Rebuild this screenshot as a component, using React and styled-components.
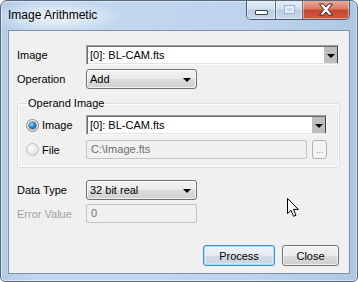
import React from "react";
import styled, { createGlobalStyle } from "styled-components";

const GlobalStyle = createGlobalStyle`
  html, body {
    margin: 0;
    padding: 0;
    background: #ffffff;
  }
  body {
    font-family: "Liberation Sans", Arial, sans-serif;
    font-size: 11px;
    color: #000;
  }
  * {
    box-sizing: border-box;
  }
`;

const Window = styled.div`
  position: relative;
  width: 358px;
  height: 282px;
  display: flex;
  flex-direction: column;
  border: 1px solid #56687c;
  border-radius: 7px 7px 5px 5px;
  background:
    radial-gradient(ellipse 70px 16px at 55px 16px, rgba(255, 255, 255, 0.75), rgba(255, 255, 255, 0) 100%),
    linear-gradient(to right, #b4cbe6 0px, #c3d8f0 40px, #bdd3ed 260px, #aec7e4 100%);
  box-shadow: inset 0 0 0 1px rgba(255, 255, 255, 0.5);
  overflow: hidden;
`;

const TitleBar = styled.div`
  height: 29px;
  display: flex;
  justify-content: space-between;
  align-items: flex-start;
`;

const Title = styled.div`
  padding: 7px 0 0 7px;
  font-size: 12px;
  line-height: 15px;
  color: #000;
`;

const CaptionGroup = styled.div`
  display: flex;
  height: 20px;
  margin: -1px 7px 0 0;
  border: 1px solid #4d5d70;
  border-top: none;
  border-radius: 0 0 5px 5px;
  overflow: hidden;
`;

const CaptionButton = styled.div`
  width: ${(p) => p.$w}px;
  height: 100%;
  display: flex;
  align-items: center;
  justify-content: center;
  border-left: ${(p) => (p.$first ? "none" : "1px solid #5a6b7e")};
  background: ${(p) =>
    p.$close
      ? "linear-gradient(to bottom, #eab0a1 0%, #dc7a65 45%, #c7462f 55%, #cc5a40 100%)"
      : "linear-gradient(to bottom, #e6eef8 0%, #d3e0ef 45%, #bccee4 55%, #c7d7ea 100%)"};
  box-shadow: inset 0 0 0 1px rgba(255, 255, 255, 0.45);
`;

const MinGlyph = styled.div`
  width: 13px;
  height: 5px;
  margin-top: 6px;
  background: #fff;
  border: 1px solid #36414d;
  border-radius: 1px;
`;

const MaxGlyph = styled.div`
  width: 11px;
  height: 9px;
  border: 1px solid #a4b3c4;
  background: #c8d6e7;
  box-shadow: inset 0 0 0 2px #e4ecf5;
`;

const CloseGlyph = styled.svg`
  width: 16px;
  height: 13px;
`;

const Client = styled.div`
  flex: 1;
  margin: 0 7px 7px 7px;
  border: 1px solid #7f91a6;
  background: #f0f0f0;
  padding: 14px 9px 0 8px;
  display: flex;
  flex-direction: column;
`;

const FormGrid = styled.div`
  display: grid;
  grid-template-columns: ${(p) => p.$label}px 1fr;
  row-gap: ${(p) => p.$gap}px;
  align-items: center;
`;

const Label = styled.div`
  color: ${(p) => (p.$disabled ? "#a0a0a0" : "#000")};
  line-height: 14px;
`;

const Combo = styled.div`
  height: 20px;
  display: flex;
  margin-right: ${(p) => p.$mr || 0}px;
  background: #fff;
  border-top: 1px solid #a0a0a0;
  border-left: 1px solid #a0a0a0;
  border-right: 1px solid #fbfbfb;
  border-bottom: 1px solid #fbfbfb;
  box-shadow: inset 1px 1px 0 #6a6a6a, inset -1px -1px 0 #e3e3e3;
`;

const ComboText = styled.div`
  flex: 1;
  padding-left: 3px;
  line-height: 18px;
`;

const ComboButton = styled.div`
  width: 14px;
  margin: 1px 0 1px 0;
  display: flex;
  align-items: center;
  justify-content: center;
  background: #bfbfbf;
  border-right: 1px solid #3a3a3a;
`;

const Arrow = styled.div`
  width: 0;
  height: 0;
  border-left: 4px solid transparent;
  border-right: 4px solid transparent;
  border-top: 4px solid #000;
  margin-top: 1px;
`;

const Dropdown = styled.div`
  width: 111px;
  height: 20px;
  display: flex;
  align-items: center;
  justify-content: space-between;
  padding: 0 5px 0 3px;
  border: 1px solid #707070;
  border-radius: 3px;
  background: linear-gradient(to bottom, #f2f2f2 0%, #ebebeb 50%, #dddddd 50%, #cfcfcf 100%);
  box-shadow: inset 0 0 0 1px rgba(255, 255, 255, 0.7);
`;

const TextBox = styled.div`
  width: ${(p) => (p.$w ? `${p.$w}px` : "auto")};
  flex: ${(p) => (p.$w ? "none" : 1)};
  height: 19px;
  padding-left: 4px;
  line-height: 17px;
  color: #6d6d6d;
  background: #f0f0f0;
  border: 1px solid #c3c3c3;
  border-radius: 2px;
`;

const Group = styled.fieldset`
  margin: 7px 0 0 0;
  padding: 5px 12px 8px 8px;
  border: 1px solid #d5dfe5;
  border-radius: 3px;
  box-shadow: inset 0 0 0 1px #ffffff;
  min-width: 0;
`;

const Legend = styled.legend`
  padding: 0 2px;
  line-height: 14px;
`;

const RadioLabel = styled.div`
  display: flex;
  align-items: center;
  gap: 3px;
  color: #000;
  line-height: 14px;
`;

const Radio = styled.span`
  width: 13px;
  height: 13px;
  border-radius: 50%;
  display: inline-flex;
  align-items: center;
  justify-content: center;
  border: 1px solid ${(p) => (p.$checked ? "#8a8a8a" : "#bdbdbd")};
  background: ${(p) =>
    p.$checked
      ? "radial-gradient(circle at 40% 35%, #ffffff 0%, #e4e4e4 70%, #cfcfcf 100%)"
      : "radial-gradient(circle at 40% 35%, #fbfbfb 0%, #e8e8e8 60%, #d4d4d4 100%)"};
`;

const RadioDot = styled.span`
  width: 7px;
  height: 7px;
  border-radius: 50%;
  background: radial-gradient(circle at 40% 35%, #9ad8fb 0%, #2a86cf 45%, #0e4c86 100%);
  box-shadow: 0 0 0 0.5px #1a3f66;
`;

const FileRow = styled.div`
  display: flex;
  gap: 5px;
`;

const BrowseButton = styled.div`
  width: 15px;
  height: 19px;
  display: flex;
  align-items: flex-end;
  justify-content: center;
  padding-bottom: 3px;
  border: 1px solid #adb2b5;
  border-radius: 3px;
  background: #f4f4f4;
  color: #9a9a9a;
  font-size: 10px;
  line-height: 10px;
  letter-spacing: -0.5px;
`;

const LowerGrid = styled(FormGrid)`
  margin-top: 12px;
`;

const ButtonRow = styled.div`
  margin-top: 22px;
  padding-right: 1px;
  display: flex;
  justify-content: flex-end;
  gap: 7px;
`;

const Button = styled.div`
  width: ${(p) => p.$w}px;
  height: 21px;
  display: flex;
  align-items: center;
  justify-content: center;
  border-radius: 3px;
  border: 1px solid ${(p) => (p.$default ? "#3c8fd1" : "#707070")};
  background: ${(p) =>
    p.$default
      ? "linear-gradient(to bottom, #eef3f7 0%, #e3eaf0 50%, #d3dde6 50%, #c6d3de 100%)"
      : "linear-gradient(to bottom, #f2f2f2 0%, #ebebeb 50%, #dddddd 50%, #cfcfcf 100%)"};
  box-shadow: ${(p) =>
    p.$default
      ? "inset 0 0 0 1px #a8dcf8, inset 0 0 0 2px rgba(255,255,255,0.35)"
      : "inset 0 0 0 1px rgba(255,255,255,0.7)"};
`;

const Cursor = styled.svg`
  position: absolute;
  left: 286px;
  top: 197px;
  width: 13px;
  height: 20px;
`;

export default function App() {
  return (
    <>
      <GlobalStyle />
      <Window>
        <TitleBar>
          <Title>Image Arithmetic</Title>
          <CaptionGroup>
            <CaptionButton $w={28} $first>
              <MinGlyph />
            </CaptionButton>
            <CaptionButton $w={27}>
              <MaxGlyph />
            </CaptionButton>
            <CaptionButton $w={47} $close>
              <CloseGlyph viewBox="0 0 16 13">
                <path
                  d="M1.5 1 L5.5 1 L8 4 L10.5 1 L14.5 1 L10.2 6.5 L14.5 12 L10.5 12 L8 9 L5.5 12 L1.5 12 L5.8 6.5 Z"
                  fill="#ffffff"
                  stroke="#4a2020"
                  strokeWidth="1"
                  strokeLinejoin="round"
                />
              </CloseGlyph>
            </CaptionButton>
          </CaptionGroup>
        </TitleBar>

        <Client>
          <FormGrid $label={69} $gap={4}>
            <Label>Image</Label>
            <Combo $mr={1}>
              <ComboText>[0]: BL-CAM.fts</ComboText>
              <ComboButton>
                <Arrow />
              </ComboButton>
            </Combo>
            <Label>Operation</Label>
            <Dropdown>
              <span>Add</span>
              <Arrow />
            </Dropdown>
          </FormGrid>

          <Group>
            <Legend>Operand Image</Legend>
            <FormGrid $label={60} $gap={5}>
              <RadioLabel>
                <Radio $checked>
                  <RadioDot />
                </Radio>
                Image
              </RadioLabel>
              <Combo>
                <ComboText>[0]: BL-CAM.fts</ComboText>
                <ComboButton>
                  <Arrow />
                </ComboButton>
              </Combo>
              <RadioLabel>
                <Radio />
                File
              </RadioLabel>
              <FileRow>
                <TextBox>C:\Image.fts</TextBox>
                <BrowseButton>...</BrowseButton>
              </FileRow>
            </FormGrid>
          </Group>

          <LowerGrid $label={69} $gap={4}>
            <Label>Data Type</Label>
            <Dropdown>
              <span>32 bit real</span>
              <Arrow />
            </Dropdown>
            <Label $disabled>Error Value</Label>
            <TextBox $w={111}>0</TextBox>
          </LowerGrid>

          <ButtonRow>
            <Button $w={72} $default>
              Process
            </Button>
            <Button $w={57}>Close</Button>
          </ButtonRow>
        </Client>

        <Cursor viewBox="0 0 13 20">
          <path
            d="M0.5 0.5 L0.5 15.5 L4 12.2 L6.6 18.3 L9 17.3 L6.5 11.4 L11.3 11.4 Z"
            fill="#ffffff"
            stroke="#000000"
            strokeWidth="1"
            strokeLinejoin="miter"
          />
        </Cursor>
      </Window>
    </>
  );
}
